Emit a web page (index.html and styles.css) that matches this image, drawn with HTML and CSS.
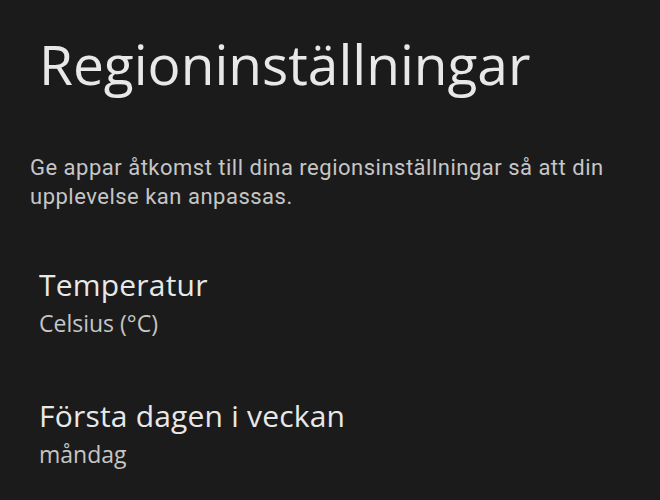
FILE: index.html
```html
<!DOCTYPE html>
<html lang="sv">
<head>
<meta charset="utf-8">
<link rel="stylesheet" href="styles.css">
</head>
<body>
<main class="page">
  <h1 class="title">Regioninställningar</h1>
  <p class="desc">Ge appar åtkomst till dina regionsinställningar så att din upplevelse kan anpassas.</p>
  <div class="list">
    <div class="item">
      <div class="item-title">Temperatur</div>
      <div class="item-sub">Celsius (°C)</div>
    </div>
    <div class="item">
      <div class="item-title">Första dagen i veckan</div>
      <div class="item-sub">måndag</div>
    </div>
  </div>
</main>
</body>
</html>
```

FILE: styles.css
```css
html, body {
  margin: 0;
  padding: 0;
  background: #1b1b1b;
  height: 100%;
  overflow: hidden;
}
.page {
  display: flex;
  flex-direction: column;
  padding-top: 32px;
}
.title {
  margin: 0 0 0 39px;
  font-family: "Open Sans", sans-serif;
  font-weight: 400;
  font-size: 55px;
  line-height: 64px;
  color: #e8e8e8;
}
.desc {
  margin: 57px 30px 0 30px;
  font-family: Roboto, sans-serif;
  font-size: 22px;
  line-height: 29px;
  letter-spacing: 0.5px;
  color: #c6c6c6;
}
.list {
  display: flex;
  flex-direction: column;
  gap: 61px;
  margin-top: 56px;
  padding-left: 39px;
}
.item {
  display: flex;
  flex-direction: column;
  gap: 6px;
}
.item-title {
  font-family: "Open Sans", sans-serif;
  font-size: 30px;
  line-height: 36px;
  letter-spacing: 0.2px;
  color: #e8e8e8;
}
.item-sub {
  font-family: "Open Sans", sans-serif;
  font-size: 23px;
  line-height: 28px;
  color: #c6c6c6;
}
```
